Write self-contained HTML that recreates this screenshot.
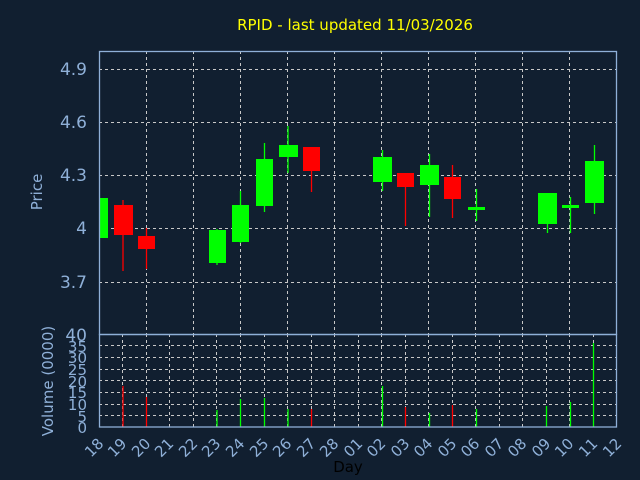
<!DOCTYPE html>
<html><head><meta charset="utf-8"><style>
html,body{margin:0;padding:0;background:#111f30;}
svg{display:block;font-family:"DejaVu Sans","Liberation Sans",sans-serif;}
</style></head><body>
<svg width="640" height="480" viewBox="0 0 640 480" xmlns="http://www.w3.org/2000/svg">
<rect width="640" height="480" fill="#111f30"/>
<text x="355" y="30" fill="#ffff00" font-size="15" text-anchor="middle">RPID - last updated 11/03/2026</text>
<g stroke="#c8c8c8" stroke-width="1" stroke-dasharray="3,3" fill="none">
<!-- price horizontal grid -->
<line x1="99" y1="69.5" x2="617" y2="69.5"/>
<line x1="99" y1="122.5" x2="617" y2="122.5"/>
<line x1="99" y1="175.5" x2="617" y2="175.5"/>
<line x1="99" y1="228.5" x2="617" y2="228.5"/>
<line x1="99" y1="282.5" x2="617" y2="282.5"/>
<!-- price vertical grid every 2 days -->
<line x1="146.5" y1="51" x2="146.5" y2="334"/>
<line x1="193.5" y1="51" x2="193.5" y2="334"/>
<line x1="240.5" y1="51" x2="240.5" y2="334"/>
<line x1="287.5" y1="51" x2="287.5" y2="334"/>
<line x1="334.5" y1="51" x2="334.5" y2="334"/>
<line x1="381.5" y1="51" x2="381.5" y2="334"/>
<line x1="428.5" y1="51" x2="428.5" y2="334"/>
<line x1="475.5" y1="51" x2="475.5" y2="334"/>
<line x1="522.5" y1="51" x2="522.5" y2="334"/>
<line x1="569.5" y1="51" x2="569.5" y2="334"/>
<!-- volume horizontal grid -->
<line x1="99" y1="345.5" x2="617" y2="345.5"/>
<line x1="99" y1="357.5" x2="617" y2="357.5"/>
<line x1="99" y1="369.5" x2="617" y2="369.5"/>
<line x1="99" y1="380.5" x2="617" y2="380.5"/>
<line x1="99" y1="392.5" x2="617" y2="392.5"/>
<line x1="99" y1="404.5" x2="617" y2="404.5"/>
<line x1="99" y1="415.5" x2="617" y2="415.5"/>
<!-- volume vertical grid every day -->
<line x1="122.5" y1="334" x2="122.5" y2="427"/>
<line x1="146.5" y1="334" x2="146.5" y2="427"/>
<line x1="169.5" y1="334" x2="169.5" y2="427"/>
<line x1="193.5" y1="334" x2="193.5" y2="427"/>
<line x1="216.5" y1="334" x2="216.5" y2="427"/>
<line x1="240.5" y1="334" x2="240.5" y2="427"/>
<line x1="264.5" y1="334" x2="264.5" y2="427"/>
<line x1="287.5" y1="334" x2="287.5" y2="427"/>
<line x1="311.5" y1="334" x2="311.5" y2="427"/>
<line x1="334.5" y1="334" x2="334.5" y2="427"/>
<line x1="358.5" y1="334" x2="358.5" y2="427"/>
<line x1="381.5" y1="334" x2="381.5" y2="427"/>
<line x1="405.5" y1="334" x2="405.5" y2="427"/>
<line x1="428.5" y1="334" x2="428.5" y2="427"/>
<line x1="452.5" y1="334" x2="452.5" y2="427"/>
<line x1="475.5" y1="334" x2="475.5" y2="427"/>
<line x1="499.5" y1="334" x2="499.5" y2="427"/>
<line x1="522.5" y1="334" x2="522.5" y2="427"/>
<line x1="546.5" y1="334" x2="546.5" y2="427"/>
<line x1="569.5" y1="334" x2="569.5" y2="427"/>
<line x1="593.5" y1="334" x2="593.5" y2="427"/>
</g>
<!-- candles -->
<g stroke-width="1.3">
<line x1="123" y1="200" x2="123" y2="271" stroke="#ff0000"/>
<line x1="146.5" y1="228" x2="146.5" y2="269" stroke="#ff0000"/>
<line x1="217" y1="229" x2="217" y2="265" stroke="#00ff00"/>
<line x1="240.5" y1="191" x2="240.5" y2="243" stroke="#00ff00"/>
<line x1="264.5" y1="143" x2="264.5" y2="212" stroke="#00ff00"/>
<line x1="288" y1="126" x2="288" y2="173" stroke="#00ff00"/>
<line x1="311.5" y1="147" x2="311.5" y2="192" stroke="#ff0000"/>
<line x1="382.5" y1="150" x2="382.5" y2="191" stroke="#00ff00"/>
<line x1="405.5" y1="173" x2="405.5" y2="226" stroke="#ff0000"/>
<line x1="429.5" y1="154" x2="429.5" y2="217" stroke="#00ff00"/>
<line x1="452.5" y1="165" x2="452.5" y2="218" stroke="#ff0000"/>
<line x1="476.5" y1="189" x2="476.5" y2="221" stroke="#00ff00"/>
<line x1="547.5" y1="193" x2="547.5" y2="233" stroke="#00ff00"/>
<line x1="570.5" y1="197" x2="570.5" y2="233" stroke="#00ff00"/>
<line x1="594.5" y1="145" x2="594.5" y2="214" stroke="#00ff00"/>
</g>
<rect x="99" y="198" width="9" height="40" fill="#00ff00"/>
<rect x="114" y="205" width="19" height="30" fill="#ff0000"/>
<rect x="138" y="236" width="17" height="13" fill="#ff0000"/>
<rect x="209" y="230" width="17" height="33" fill="#00ff00"/>
<rect x="232" y="205" width="17" height="37" fill="#00ff00"/>
<rect x="256" y="159" width="17" height="47" fill="#00ff00"/>
<rect x="279" y="145" width="19" height="12" fill="#00ff00"/>
<rect x="303" y="147" width="17" height="24" fill="#ff0000"/>
<rect x="373" y="157" width="19" height="25" fill="#00ff00"/>
<rect x="397" y="173" width="17" height="14" fill="#ff0000"/>
<rect x="420" y="165" width="19" height="20" fill="#00ff00"/>
<rect x="444" y="177" width="17" height="22" fill="#ff0000"/>
<rect x="468" y="207" width="17" height="3" fill="#00ff00"/>
<rect x="538" y="193" width="19" height="31" fill="#00ff00"/>
<rect x="562" y="205" width="17" height="3" fill="#00ff00"/>
<rect x="585" y="161" width="19" height="42" fill="#00ff00"/>
<!-- volume bars -->
<g stroke-width="1.3">
<line x1="123" y1="386" x2="123" y2="427" stroke="#ff0000"/>
<line x1="146.5" y1="397" x2="146.5" y2="427" stroke="#ff0000"/>
<line x1="217" y1="410" x2="217" y2="427" stroke="#00ff00"/>
<line x1="240.5" y1="399" x2="240.5" y2="427" stroke="#00ff00"/>
<line x1="264.5" y1="398" x2="264.5" y2="427" stroke="#00ff00"/>
<line x1="288" y1="409" x2="288" y2="427" stroke="#00ff00"/>
<line x1="311.5" y1="409" x2="311.5" y2="427" stroke="#ff0000"/>
<line x1="382.5" y1="386" x2="382.5" y2="427" stroke="#00ff00"/>
<line x1="405.5" y1="407" x2="405.5" y2="427" stroke="#ff0000"/>
<line x1="429.5" y1="413" x2="429.5" y2="427" stroke="#00ff00"/>
<line x1="452.5" y1="405" x2="452.5" y2="427" stroke="#ff0000"/>
<line x1="476.5" y1="409" x2="476.5" y2="427" stroke="#00ff00"/>
<line x1="546.5" y1="406" x2="546.5" y2="427" stroke="#00ff00"/>
<line x1="570.5" y1="402" x2="570.5" y2="427" stroke="#00ff00"/>
<line x1="593.5" y1="343" x2="593.5" y2="427" stroke="#00ff00"/>
</g>
<!-- frames -->
<g stroke="#8fb0d8" stroke-width="1.3" fill="none">
<rect x="99.5" y="51.5" width="517" height="283"/>
<rect x="99.5" y="334.5" width="517" height="92.5"/>
</g>
<g fill="#8fb0d8" font-size="17" text-anchor="end">
<text x="87" y="75">4.9</text>
<text x="87" y="128">4.6</text>
<text x="87" y="181">4.3</text>
<text x="87" y="234">4</text>
<text x="87" y="288">3.7</text>
<text x="87" y="341">40</text>
</g>
<g fill="#8fb0d8" font-size="15" text-anchor="end">
<text x="87" y="352">35</text>
<text x="87" y="363">30</text>
<text x="87" y="375">25</text>
<text x="87" y="387">20</text>
<text x="87" y="398">15</text>
<text x="87" y="410">10</text>
<text x="87" y="422">5</text>
<text x="87" y="433">0</text>
</g>
<text transform="translate(42,192) rotate(-90)" fill="#8fb0d8" font-size="15" text-anchor="middle">Price</text>
<text transform="translate(53,381) rotate(-90)" fill="#8fb0d8" font-size="15" text-anchor="middle">Volume (0000)</text>
<g fill="#8fb0d8" font-size="15">
<text transform="translate(91,458) rotate(-45)">18</text>
<text transform="translate(114,458) rotate(-45)">19</text>
<text transform="translate(138,458) rotate(-45)">20</text>
<text transform="translate(161,458) rotate(-45)">21</text>
<text transform="translate(185,458) rotate(-45)">22</text>
<text transform="translate(208,458) rotate(-45)">23</text>
<text transform="translate(232,458) rotate(-45)">24</text>
<text transform="translate(256,458) rotate(-45)">25</text>
<text transform="translate(279,458) rotate(-45)">26</text>
<text transform="translate(303,458) rotate(-45)">27</text>
<text transform="translate(326,458) rotate(-45)">28</text>
<text transform="translate(350,458) rotate(-45)">01</text>
<text transform="translate(373,458) rotate(-45)">02</text>
<text transform="translate(397,458) rotate(-45)">03</text>
<text transform="translate(420,458) rotate(-45)">04</text>
<text transform="translate(444,458) rotate(-45)">05</text>
<text transform="translate(467,458) rotate(-45)">06</text>
<text transform="translate(491,458) rotate(-45)">07</text>
<text transform="translate(514,458) rotate(-45)">08</text>
<text transform="translate(538,458) rotate(-45)">09</text>
<text transform="translate(561,458) rotate(-45)">10</text>
<text transform="translate(585,458) rotate(-45)">11</text>
<text transform="translate(609,458) rotate(-45)">12</text>
</g>
<text x="348" y="472" fill="#000000" font-size="15" text-anchor="middle">Day</text>
</svg>
</body></html>
